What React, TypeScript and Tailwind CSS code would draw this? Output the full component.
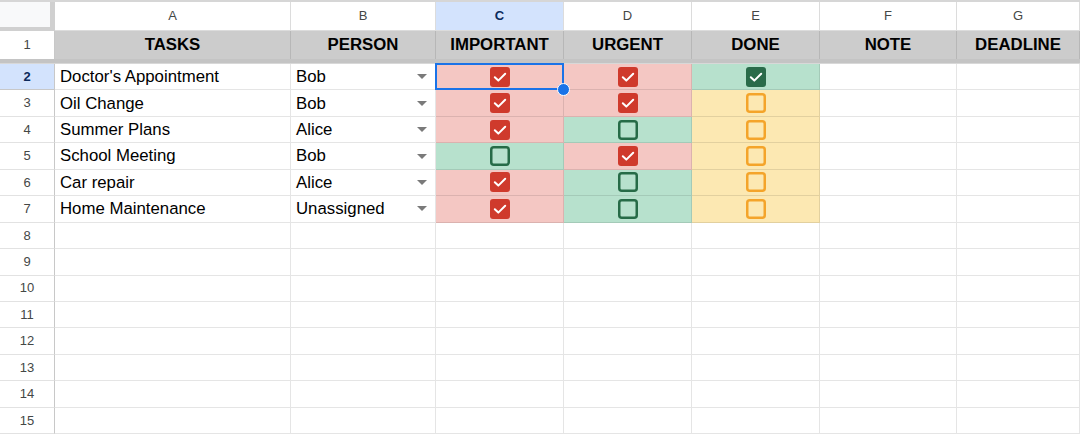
import React from "react";

const COLS = "grid grid-cols-[55px_236px_145px_128px_128px_128px_137px_123px]";

type Row = { task: string; person: string; imp: boolean; urg: boolean; done: boolean };

const rows: Row[] = [
  { task: "Doctor's Appointment", person: "Bob", imp: true, urg: true, done: true },
  { task: "Oil Change", person: "Bob", imp: true, urg: true, done: false },
  { task: "Summer Plans", person: "Alice", imp: true, urg: false, done: false },
  { task: "School Meeting", person: "Bob", imp: false, urg: true, done: false },
  { task: "Car repair", person: "Alice", imp: true, urg: false, done: false },
  { task: "Home Maintenance", person: "Unassigned", imp: true, urg: false, done: false },
];

function Checked({ color }: { color: string }) {
  return (
    <svg width="20" height="20" viewBox="0 0 20 20">
      <rect x="0" y="0" width="20" height="20" rx="3" fill={color} />
      <path d="M4.8 10.3 L8.3 13.6 L15.2 6.8" fill="none" stroke="#fff" strokeWidth="2" strokeLinecap="round" strokeLinejoin="round" />
    </svg>
  );
}

function Unchecked({ color }: { color: string }) {
  return (
    <svg width="20" height="20" viewBox="0 0 20 20">
      <rect x="1.25" y="1.25" width="17.5" height="17.5" rx="2.5" fill="none" stroke={color} strokeWidth="2.5" />
    </svg>
  );
}

function Arrow() {
  return (
    <svg width="10" height="5" viewBox="0 0 10 5">
      <polygon points="0,0 10,0 5,5" fill="#7a7a7a" />
    </svg>
  );
}

const cellB = "border-r border-b border-black/10";

function FlagCell({ on, selected }: { on: boolean; selected?: boolean }) {
  return (
    <div className={`relative flex items-center justify-center ${cellB} ${on ? "bg-[#f4c7c3]" : "bg-[#b7e1cd]"}`}>
      {on ? <Checked color="#cf3a2c" /> : <Unchecked color="#266b47" />}
      {selected && (
        <>
          <div className="absolute -left-px -top-px -right-px -bottom-px border-2 border-[#1a73e8] z-10" />
          <div className="absolute -right-[7px] -bottom-[7px] w-[13px] h-[13px] rounded-full bg-[#1a73e8] border-[1.5px] border-white z-20" />
        </>
      )}
    </div>
  );
}

function DoneCell({ on }: { on: boolean }) {
  return (
    <div className={`flex items-center justify-center ${cellB} ${on ? "bg-[#b7e1cd]" : "bg-[#fce8b2]"}`}>
      {on ? <Checked color="#2a6b4a" /> : <Unchecked color="#f4a42a" />}
    </div>
  );
}

export default function App() {
  const letters = ["A", "B", "C", "D", "E", "F", "G"];
  const headers = ["TASKS", "PERSON", "IMPORTANT", "URGENT", "DONE", "NOTE", "DEADLINE"];
  return (
    <div className="w-[1080px] h-[435px] overflow-hidden bg-white text-black border-t-2 border-[#d6d6d6]" style={{ fontFamily: "'Liberation Sans', Arial, sans-serif" }}>
      {/* column letters */}
      <div className={`${COLS} h-[29px]`}>
        <div className="bg-[#d0d0d0] pr-[5px] pb-[4px]">
          <div className="w-full h-full bg-[#f8f9fa]" />
        </div>
        {letters.map((l) => (
          <div
            key={l}
            className={`flex items-center justify-center text-[13px] border-r border-b border-[#dcdcdc] ${
              l === "C" ? "bg-[#d3e3fd] text-[#0b2a5b] font-bold" : "bg-white text-[#444746]"
            }`}
          >
            {l}
          </div>
        ))}
      </div>
      {/* row 1 */}
      <div className={`${COLS} h-[28px]`}>
        <div className="flex items-center justify-center text-[13px] text-[#444746] bg-white border-r border-[#c8c8c8]">1</div>
        {headers.map((h) => (
          <div key={h} className="flex items-center justify-center bg-[#cccccc] border-r border-black/10 text-[16.8px] font-bold">
            {h}
          </div>
        ))}
      </div>
      <div className="h-[5px] bg-[#c4c4c4] border-b border-[#d8d8d8]" />
      {/* data rows */}
      {rows.map((r, i) => (
        <div key={i} className={`${COLS} h-[26.45px]`}>
          <div
            className={`flex items-center justify-center text-[13px] border-r border-b border-[#c8c8c8] ${
              i === 0 ? "bg-[#d3e3fd] text-[#0b2a5b] font-bold" : "bg-white text-[#444746] border-b-[#e2e2e2]"
            }`}
          >
            {i + 2}
          </div>
          <div className={`flex items-center pl-[5px] text-[16.8px] ${cellB}`}>{r.task}</div>
          <div className={`flex items-center justify-between pl-[5px] pr-[8px] text-[16.8px] ${cellB}`}>
            <span>{r.person}</span>
            <Arrow />
          </div>
          <FlagCell on={r.imp} selected={i === 0} />
          <FlagCell on={r.urg} />
          <DoneCell on={r.done} />
          <div className={cellB} />
          <div className={cellB} />
        </div>
      ))}
      {Array.from({ length: 8 }, (_, k) => k + 8).map((n) => (
        <div key={n} className={`${COLS} h-[26.45px]`}>
          <div className="flex items-center justify-center text-[13px] text-[#444746] border-r border-[#c8c8c8] border-b border-b-[#e2e2e2]">
            {n}
          </div>
          {Array.from({ length: 7 }).map((_, j) => (
            <div key={j} className={cellB} />
          ))}
        </div>
      ))}
    </div>
  );
}
